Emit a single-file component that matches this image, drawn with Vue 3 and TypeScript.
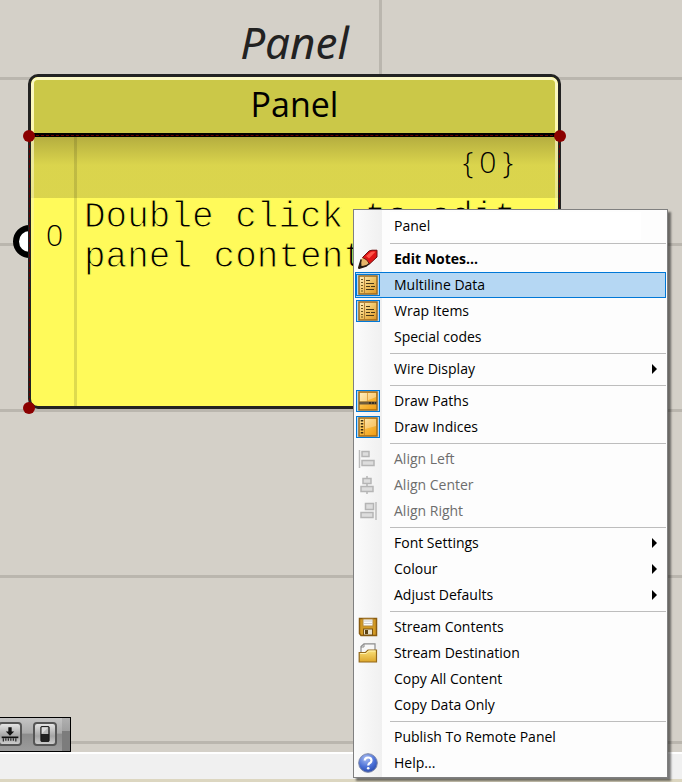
<script setup lang="ts">
import { ref } from 'vue'

type IconName =
  | 'pencil' | 'list' | 'paths' | 'indices'
  | 'left' | 'center' | 'right'
  | 'save' | 'folder' | 'help'

interface MenuEntry {
  label: string
  icon?: IconName
  checked?: boolean
  bold?: boolean
  disabled?: boolean
  submenu?: boolean
}

const nickname = ref('Panel')
const active = ref('Multiline Data')

const groups = ref<MenuEntry[][]>([
  [
    { label: 'Edit Notes...', icon: 'pencil', bold: true },
    { label: 'Multiline Data', icon: 'list', checked: true },
    { label: 'Wrap Items', icon: 'list', checked: true },
    { label: 'Special codes' },
  ],
  [{ label: 'Wire Display', submenu: true }],
  [
    { label: 'Draw Paths', icon: 'paths', checked: true },
    { label: 'Draw Indices', icon: 'indices', checked: true },
  ],
  [
    { label: 'Align Left', icon: 'left', disabled: true },
    { label: 'Align Center', icon: 'center', disabled: true },
    { label: 'Align Right', icon: 'right', disabled: true },
  ],
  [
    { label: 'Font Settings', submenu: true },
    { label: 'Colour', submenu: true },
    { label: 'Adjust Defaults', submenu: true },
  ],
  [
    { label: 'Stream Contents', icon: 'save' },
    { label: 'Stream Destination', icon: 'folder' },
    { label: 'Copy All Content' },
    { label: 'Copy Data Only' },
  ],
  [
    { label: 'Publish To Remote Panel' },
    { label: 'Help...', icon: 'help' },
  ],
])
</script>

<template>
  <div class="app">
    <main class="canvas">
      <div class="caption">Panel</div>
      <span class="grip"></span>
      <section class="node">
        <h1 class="node-title">Panel</h1>
        <div class="node-body">
          <div class="path-row"><span class="num">{0}</span></div>
          <div class="data-row">
            <span class="index num">0</span>
            <p class="content">Double click to edit<br>panel content…</p>
          </div>
        </div>
        <i class="guide guide-top"></i>
        <i class="guide guide-left"></i>
        <i class="guide guide-right"></i>
        <i class="anchor anchor-tl"></i>
        <i class="anchor anchor-tr"></i>
        <i class="anchor anchor-bl"></i>
      </section>

      <div class="widget-bar">
        <button type="button" class="widget" aria-label="Dock">
          <svg width="24" height="24" viewBox="0 0 24 24">
            <path d="M10 4h4v5h3l-5 5-5-5h3z" fill="#111" />
            <path d="M2 15h20v2H2z" fill="#111" />
            <path d="M4 17v4M7 17v3M10 17v3M13 17v3M16 17v3M19 17v4" stroke="#222" stroke-width="1.4" />
          </svg>
        </button>
        <button type="button" class="widget" aria-label="Level">
          <svg width="24" height="24" viewBox="0 0 24 24">
            <rect x="7" y="3" width="10" height="18" rx="1" fill="#222" stroke="#111" />
            <rect x="8" y="4" width="8" height="8" fill="#bbb" />
            <path d="M8 4h8L8 12z" fill="#ddd" />
          </svg>
        </button>
      </div>
    </main>

    <footer class="status"></footer>

    <div class="menu" role="menu">
      <input v-model="nickname" class="name-box" type="text" aria-label="Name">
      <div v-for="(group, g) in groups" :key="g" class="group" role="group">
        <button
          v-for="item in group"
          :key="item.label"
          type="button"
          class="item"
          :class="{ bold: item.bold, active: item.label === active }"
          :role="item.checked ? 'menuitemcheckbox' : 'menuitem'"
          :aria-checked="item.checked"
          :disabled="item.disabled"
          @mouseenter="active = item.label"
        >
          <span class="icon" :class="{ checked: item.checked }">
            <svg v-if="item.icon" width="20" height="20" viewBox="0 0 20 20" aria-hidden="true">
              <defs>
                <linearGradient id="gold" x1="0" y1="0" x2="1" y2="1">
                  <stop offset="0" stop-color="#ffe9a6" />
                  <stop offset="0.5" stop-color="#f9b93c" />
                  <stop offset="1" stop-color="#ee9a12" />
                </linearGradient>
                <linearGradient id="tan" x1="0" y1="0" x2="1" y2="1">
                  <stop offset="0" stop-color="#fff0c4" />
                  <stop offset="0.5" stop-color="#f0c566" />
                  <stop offset="1" stop-color="#dd9420" />
                </linearGradient>
                <linearGradient id="manila" x1="0" y1="0" x2="0" y2="1">
                  <stop offset="0" stop-color="#fbe27c" />
                  <stop offset="1" stop-color="#dda62a" />
                </linearGradient>
                <radialGradient id="ball" cx="0.4" cy="0.25" r="0.8">
                  <stop offset="0" stop-color="#a9bdf2" />
                  <stop offset="0.6" stop-color="#4a6fd6" />
                  <stop offset="1" stop-color="#2748a8" />
                </radialGradient>
              </defs>
              <template v-if="item.icon === 'pencil'">
                <path d="M.5 19.500L3 10 9 17z" fill="#1a1a1a" />
                <path d="M3 10.500L6 7 12 13.500 8 16.500 3.500 17z" fill="#e6b56a" />
                <path d="M4.500 8.500L11 2Q13 .8 19 1.200V8L11.500 15Q9.500 10 4.500 8.500z" fill="#df1515" stroke="#6d1010" />
                <path d="M8 7L13 3Q15 2 17.500 2.800L11 9.500z" fill="#ff5548" />
                <path d="M.5 19.500L3.200 10.500M.5 19.500L8 17 11.500 14.500" fill="none" stroke="#2b1a10" stroke-width="1.500" />
              </template>
              <template v-else-if="item.icon === 'list'">
                <rect x="1" y="1" width="18" height="18" fill="url(#tan)" stroke="#9c6a1e" stroke-width="1.500" />
                <path d="M6.500 2v16" stroke="#b4823a" />
                <path d="M3 4.500h2M3 7.500h2M3 10.500h2M3 13.500h2M3 16h2" stroke="#6a5420" />
                <path d="M8 5.500h4M8 8.500h8M8 11.500h4M13 11.500h4M8 14.500h8" stroke="#4a3a18" stroke-width="1.200" />
              </template>
              <template v-else-if="item.icon === 'paths'">
                <rect x="1" y="1" width="18" height="18" fill="url(#gold)" stroke="#a36b16" stroke-width="1.500" />
                <path d="M2 2h16v4L8 10H2z" fill="#fff" opacity=".35" />
                <path d="M9.500 2v9" stroke="#e0a548" />
                <path d="M1 12h18" stroke="#6e5b3c" stroke-width="3" />
                <path d="M11 12h7" stroke="#222" stroke-width="1.500" stroke-dasharray="2 1" />
              </template>
              <template v-else-if="item.icon === 'indices'">
                <rect x="1" y="1" width="18" height="18" fill="url(#gold)" stroke="#a36b16" stroke-width="1.500" />
                <path d="M7 2h11v7L7 12z" fill="#fff" opacity=".3" />
                <path d="M6.500 2v16" stroke="#c98a2c" />
                <path d="M4 3v15" stroke="#3a2c10" stroke-width="2.500" stroke-dasharray="1.500 1.500" />
              </template>
              <template v-else-if="item.icon === 'left'">
                <path d="M1.500 1v18" stroke="#bcbcbc" stroke-width="1.500" />
                <rect x="4" y="2.500" width="7" height="5" fill="#ddd" stroke="#b5b5b5" stroke-width="1.500" />
                <rect x="4" y="11.500" width="12" height="5" fill="#ddd" stroke="#b5b5b5" stroke-width="1.500" />
              </template>
              <template v-else-if="item.icon === 'center'">
                <path d="M9 1v18" stroke="#b5b5b5" stroke-width="1.500" />
                <rect x="5" y="3.500" width="8" height="5" fill="#ddd" stroke="#b5b5b5" stroke-width="1.500" />
                <rect x="3" y="11.500" width="12" height="5" fill="#ddd" stroke="#b5b5b5" stroke-width="1.500" />
              </template>
              <template v-else-if="item.icon === 'right'">
                <path d="M18 1v18" stroke="#bcbcbc" stroke-width="1.500" />
                <rect x="7.500" y="2.500" width="8" height="6" fill="#ddd" stroke="#b5b5b5" stroke-width="1.500" />
                <rect x="3" y="11.500" width="12" height="5" fill="#ddd" stroke="#b5b5b5" stroke-width="1.500" />
              </template>
              <template v-else-if="item.icon === 'save'">
                <path d="M1.500 1.500h17v17H3l-1.500-2z" fill="#d39a24" stroke="#8a5c10" stroke-width="1.500" />
                <rect x="5" y="2" width="10" height="7" fill="#fafafa" stroke="#b48a3c" />
                <path d="M6 4h8M6 6.500h8" stroke="#ccc" />
                <rect x="5.500" y="12" width="9" height="6" fill="#e8e0cc" stroke="#7a5412" />
                <rect x="7" y="13" width="3" height="4" fill="#5c4212" />
              </template>
              <template v-else-if="item.icon === 'folder'">
                <path d="M3 12V3.500L6 .8h11V12z" fill="#f7f7f7" stroke="#8c8c8c" stroke-width="1.200" />
                <path d="M3 4h3V1" fill="none" stroke="#8c8c8c" />
                <path d="M1.200 19V9.500h6.300L10 7h8.500v12z" fill="url(#manila)" stroke="#94691a" stroke-width="1.200" />
                <path d="M2.200 10.500h6L10.500 8h7" fill="none" stroke="#fff2b0" />
              </template>
              <template v-else>
                <circle cx="10" cy="10" r="9.300" fill="url(#ball)" stroke="#7d87a8" />
                <path d="M6.700 7.500Q7 4.500 10.200 4.500T13.500 7.500Q13.500 9 11.500 10.200 10.200 11 10.200 12.500" fill="none" stroke="#fff" stroke-width="2.200" />
                <circle cx="10.200" cy="15.300" r="1.300" fill="#fff" />
              </template>
            </svg>
          </span>
          <span class="label">{{ item.label }}</span>
          <svg v-if="item.submenu" class="arrow" width="5" height="10" viewBox="0 0 5 10" aria-hidden="true">
            <path d="M0 0L5 5 0 10z" fill="#000" />
          </svg>
        </button>
      </div>
    </div>
  </div>
</template>

<style>
body {
  margin: 0;
}
</style>

<style scoped>
.app {
  position: relative;
  display: flex;
  flex-direction: column;
  min-height: 100vh;
  overflow: hidden;
  font-family: "Open Sans", "Noto Sans", sans-serif;
  color: #000;
}

.canvas {
  position: relative;
  flex: 1;
  background-color: #d4d0c8;
  background-image:
    linear-gradient(#bab6ae, #bab6ae),
    linear-gradient(#bab6ae 3px, transparent 3px);
  background-size: 3px 100%, 100% 166px;
  background-position: 379px 0, 0 77px;
  background-repeat: no-repeat, repeat;
}

.caption {
  position: absolute;
  left: 28px;
  top: 12px;
  width: 533px;
  text-align: center;
  font-family: "Noto Sans", sans-serif;
  font-size: 44px;
  line-height: 60px;
  font-style: italic;
  color: #222;
}

.grip {
  position: absolute;
  left: 13px;
  top: 225px;
  box-sizing: border-box;
  width: 33px;
  height: 33px;
  border: 6px solid #000;
  border-radius: 50%;
  background: #fff;
}

.node {
  position: absolute;
  left: 28px;
  top: 74px;
  box-sizing: border-box;
  display: flex;
  flex-direction: column;
  width: 533px;
  height: 335px;
  border: 3px solid #222;
  border-radius: 10px;
  background: #fffa5a;
}

.node::after {
  content: "";
  position: absolute;
  inset: 0;
  border: 3px solid #fbf8c8;
  border-bottom: 0;
  border-radius: 7px;
  mask-image: linear-gradient(#000, transparent 70%);
}

.node-title {
  position: relative;
  z-index: 1;
  margin: 0;
  height: 56px;
  border-bottom: 4px solid #000;
  text-align: center;
  font-size: 34px;
  line-height: 54px;
  font-weight: 400;
}

.node-title::before {
  content: "";
  position: absolute;
  inset: 3px 3px 0;
  z-index: -1;
  border-radius: 4px 4px 0 0;
  background: #cbc848;
}

.node-body {
  flex: 1;
  border-radius: 0 0 7px 7px;
  background: linear-gradient(90deg, transparent 43px, rgba(0, 0, 0, 0.13) 43px 46px, transparent 46px);
}

.path-row {
  height: 61px;
  padding-right: 39px;
  background: linear-gradient(rgba(60, 50, 20, 0.38), rgba(60, 50, 20, 0.19) 28px, rgba(60, 50, 20, 0.19));
  text-align: right;
  line-height: 50px;
}

.num {
  font-family: "Open Sans", sans-serif;
  font-weight: 300;
  font-size: 30px;
}

.path-row .num {
  letter-spacing: 6px;
}

.data-row {
  display: flex;
}

.index {
  width: 47px;
  text-align: center;
  line-height: 74px;
}

.content {
  margin: 0;
  padding-left: 6px;
  white-space: nowrap;
  font-family: "Liberation Mono", monospace;
  font-size: 36px;
  line-height: 40px;
  -webkit-text-stroke: 1px #fffa5a;
}

.guide {
  position: absolute;
  z-index: 1;
  border: 0 dashed #6b0000;
}

.guide-top {
  left: 0;
  right: 0;
  top: 58px;
  border-top-width: 1px;
}

.guide-left,
.guide-right {
  top: 58px;
  bottom: 0;
  border-left-width: 1px;
}

.guide-left {
  left: -2px;
}

.guide-right {
  right: -2px;
}

.anchor {
  position: absolute;
  z-index: 2;
  width: 12px;
  height: 12px;
  border-radius: 50%;
  background: #8b0000;
}

.anchor-tl {
  left: -8px;
  top: 53px;
}

.anchor-tr {
  right: -8px;
  top: 53px;
}

.anchor-bl {
  left: -8px;
  bottom: -8px;
}

.widget-bar {
  position: absolute;
  left: 0;
  bottom: 0;
  display: flex;
  align-items: center;
  gap: 11px;
  padding: 4px 5px 5px 0;
  border: 1px solid #000;
  border-left: 0;
  background: linear-gradient(#c4c4c4, #aaa 45%, #8c8c8c 50%, #9c9c9c);
}

.widget-bar::after {
  content: "";
  position: absolute;
  right: 0;
  top: 0;
  bottom: 0;
  width: 8px;
  background: linear-gradient(#b0b0b0, #a0a0a0 38%, #7c7c7c 40%);
}

.widget {
  display: flex;
  align-items: center;
  justify-content: center;
  box-sizing: border-box;
  width: 24px;
  height: 24px;
  padding: 0;
  border: 2px solid #555;
  border-radius: 4px;
  background: linear-gradient(#e4e4e4, #a4a4a4 60%, #ccc);
}

.widget:first-child {
  margin-left: -2px;
}

.widget:last-child {
  margin-right: 8px;
}

.status {
  height: 25px;
  border-top: 2px solid #fff;
  border-bottom: 3px solid #dcd6c0;
  background: #f0f0f0;
}

.menu {
  position: absolute;
  left: 353px;
  top: 209px;
  z-index: 3;
  box-sizing: border-box;
  display: flex;
  flex-direction: column;
  width: 315px;
  padding: 2px 1px 1px;
  border: 1px solid #808080;
  background: linear-gradient(90deg, #fbfbfb, #f0f0f0 28px, #fdfdfd 28px);
  box-shadow: 3px 3px 2px rgba(0, 0, 0, 0.5);
  font-size: 14px;
}

.name-box {
  box-sizing: border-box;
  height: 28px;
  margin: 0 25px 0 35px;
  padding: 0 4px 2px;
  border: 0;
  outline: 0;
  background: #fff;
  color: #000;
  font: inherit;
}

.group {
  display: flex;
  flex-direction: column;
}

.group::before {
  content: "";
  height: 1px;
  margin: 3px 0 2px 35px;
  background: #bdbdbd;
}

.item {
  box-sizing: border-box;
  display: flex;
  align-items: center;
  height: 26px;
  padding: 0 8px 0 0;
  border: 1px solid transparent;
  background: none;
  color: #000;
  font: inherit;
  text-align: left;
}

.item.active {
  border-color: #0078d7;
  background: #b5d7f3;
}

.item:disabled {
  color: #6d6d6d;
}

.item.bold {
  font-weight: 700;
}

.icon {
  box-sizing: border-box;
  display: flex;
  align-items: center;
  justify-content: center;
  width: 24px;
  height: 22px;
  margin-right: 14px;
}

.icon.checked {
  border: 1px solid #0078d7;
  background: #b5d7f3;
}

.label {
  flex: 1;
  padding-bottom: 2px;
  white-space: nowrap;
}
</style>
